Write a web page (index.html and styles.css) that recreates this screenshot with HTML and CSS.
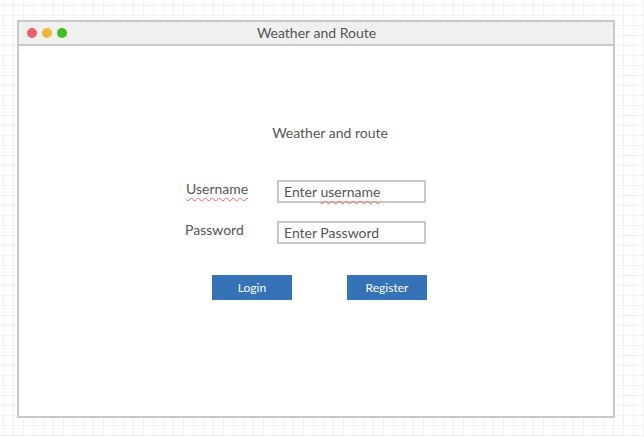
FILE: index.html
```html
<!DOCTYPE html>
<html>
<head>
<meta charset="utf-8">
<link rel="stylesheet" href="styles.css">
</head>
<body>
<div class="window">
  <div class="titlebar">
    <div class="dots">
      <span class="dot red"></span>
      <span class="dot yellow"></span>
      <span class="dot green"></span>
    </div>
    <div class="title">Weather and Route</div>
  </div>
  <div class="content">
    <div class="heading">Weather and route</div>
    <div class="form">
      <div class="row">
        <span class="label"><span class="spell">Username</span></span>
        <div class="input">Enter <span class="spell">username</span></div>
      </div>
      <div class="row">
        <span class="label pw">Password</span>
        <div class="input">Enter Password</div>
      </div>
    </div>
    <div class="buttons">
      <div class="btn">Login</div>
      <div class="btn">Register</div>
    </div>
  </div>
</div>
</body>
</html>
```
FILE: styles.css
```css
html, body {
  margin: 0;
  padding: 0;
}
body {
  width: 644px;
  height: 437px;
  font-family: Lato, "Open Sans", sans-serif;
  color: #555;
  background-color: #fff;
  background-image:
    linear-gradient(to right, #f1f1f1 1px, transparent 1px),
    linear-gradient(to bottom, #f1f1f1 1px, transparent 1px);
  background-size: 10px 10px;
  background-position: 3px 5px;
  padding-top: 20px;
  box-sizing: border-box;
  overflow: hidden;
}
.window {
  margin-left: 17px;
  width: 598px;
  height: 398px;
  box-sizing: border-box;
  border: 2px solid #c8c8c8;
  background: #fff;
  display: flex;
  flex-direction: column;
}
.titlebar {
  height: 22px;
  background: #f0f0f0;
  border-bottom: 2px solid #c8c8c8;
  position: relative;
  display: flex;
  align-items: center;
  justify-content: center;
}
.dots {
  position: absolute;
  left: 8px;
  top: 6px;
  display: flex;
  gap: 5px;
}
.dot {
  width: 10px;
  height: 10px;
  border-radius: 50%;
  display: block;
}
.red { background: #ee5f6b; }
.yellow { background: #f1b734; }
.green { background: #3ebf1f; }
.title {
  font-size: 14px;
  color: #555;
  line-height: 22px;
  margin-left: 1px;
}
.content {
  flex: 1;
  position: relative;
}
.heading {
  margin-top: 78px;
  margin-left: 28px;
  text-align: center;
  font-size: 14px;
  line-height: 17px;
}
.form {
  margin-top: 39px;
  margin-left: 167px;
  display: flex;
  flex-direction: column;
  gap: 18px;
}
.row {
  display: flex;
  align-items: flex-start;
}
.label {
  width: 91px;
  font-size: 14px;
  line-height: 17px;
  padding-top: 0;
}
.label.pw {
  margin-left: -1px;
  width: 92px;
}
.spell {
  text-decoration: underline wavy #e86a6a;
  text-decoration-thickness: 1px;
  text-underline-offset: 3px;
}
.input {
  width: 149px;
  height: 23px;
  box-sizing: border-box;
  border: 2px solid #c8c8c8;
  font-size: 14px;
  line-height: 20px;
  padding-left: 5px;
  color: #555;
}
.buttons {
  margin-top: 31px;
  margin-left: 193px;
  display: flex;
  gap: 55px;
}
.btn {
  width: 80px;
  height: 25px;
  background: #3572b6;
  color: #fff;
  font-size: 12px;
  line-height: 25px;
  text-align: center;
}
```
